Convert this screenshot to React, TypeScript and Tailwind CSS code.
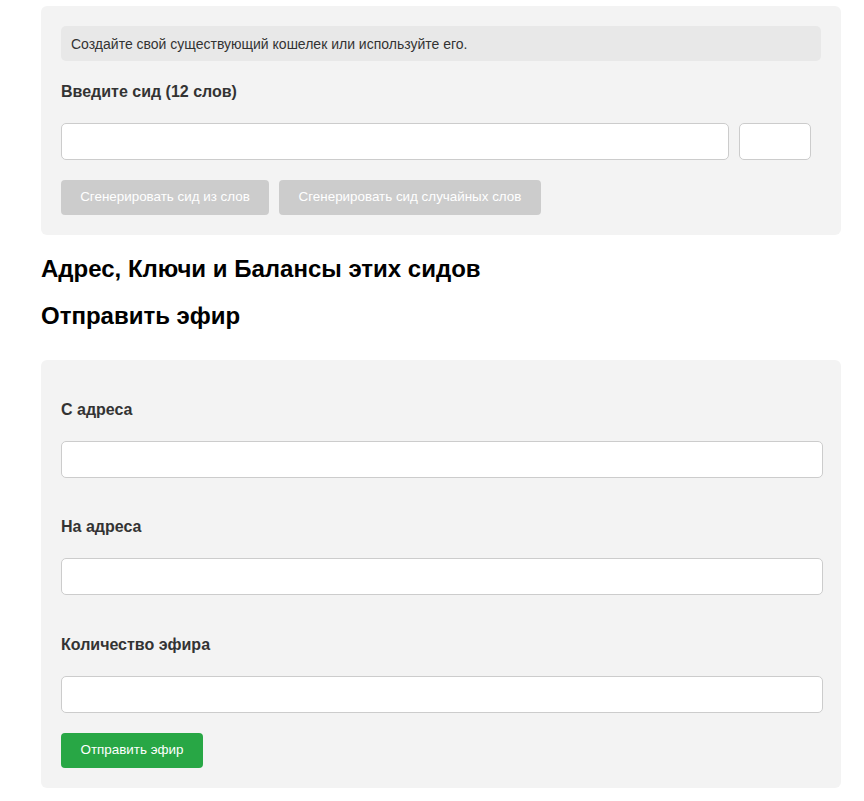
import React, { FC } from "react";

const Field: FC<{ label: string; top: string }> = ({ label, top }) => (
  <div className={top}>
    <div className="text-base font-bold leading-6 text-[#333]">{label}</div>
    <input className="mt-[19px] block h-[37px] w-[762px] rounded-[5px] border border-[#ccc] bg-white" />
  </div>
);

const App: FC = () => {
  return (
    <div className="min-h-[801px] bg-white font-['Liberation_Sans',Arial,sans-serif]">
      <div className="ml-[41px] w-[800px] pt-[6px]">
        <div className="rounded-md bg-[#f3f3f3] p-5">
          <div className="flex h-[35px] items-center rounded-[5px] bg-[#e8e8e8] px-[10px] text-sm text-[#333]">
            Создайте свой существующий кошелек или используйте его.
          </div>
          <div className="mt-[19px] text-base font-bold leading-6 text-[#333]">Введите сид (12 слов)</div>
          <div className="mt-[19px] flex gap-[10px]">
            <input className="h-[37px] w-[668px] rounded-[5px] border border-[#ccc] bg-white" />
            <input className="h-[37px] w-[72px] rounded-[5px] border border-[#ccc] bg-white" />
          </div>
          <div className="mt-5 flex gap-[10px]">
            <button className="h-[35px] w-[208px] rounded-[4px] bg-[#cccccc] text-[13.4px] text-white">
              Сгенерировать сид из слов
            </button>
            <button className="h-[35px] w-[262px] rounded-[4px] bg-[#cccccc] text-[13.4px] text-white">
              Сгенерировать сид случайных слов
            </button>
          </div>
        </div>

        <h2 className="mt-[20px] text-2xl font-bold leading-7 text-black">Адрес, Ключи и Балансы этих сидов</h2>
        <h2 className="mt-[19px] text-2xl font-bold leading-7 text-black">Отправить эфир</h2>

        <div className="mt-[30px] rounded-md bg-[#f3f3f3] px-5 pb-5">
          <Field label="С адреса" top="pt-[38px]" />
          <Field label="На адреса" top="pt-[37px]" />
          <Field label="Количество эфира" top="pt-[38px]" />
          <button className="mt-5 h-[35px] w-[142px] rounded-[4px] bg-[#28a745] text-[13.4px] text-white">
            Отправить эфир
          </button>
        </div>
      </div>
    </div>
  );
};

export default App;
